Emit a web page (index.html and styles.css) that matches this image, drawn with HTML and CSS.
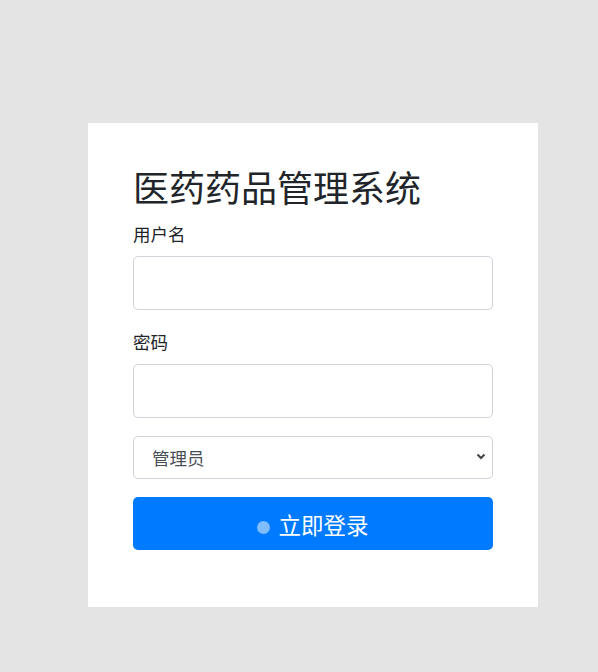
FILE: index.html
```html
<!DOCTYPE html>
<html lang="zh-CN">
<head>
<meta charset="utf-8">
<title>医药药品管理系统</title>
<link rel="stylesheet" href="styles.css">
</head>
<body>
<div class="page">
  <form class="card">
    <h1 class="title">医药药品管理系统</h1>
    <label class="label" for="u">用户名</label>
    <input class="field" id="u" type="text">
    <label class="label label-gap" for="p">密码</label>
    <input class="field" id="p" type="password">
    <div class="select-wrap">
      <select class="select">
        <option>管理员</option>
      </select>
      <svg class="chev" width="10" height="7" viewBox="0 0 10 7"><path d="M1.5 1.5 L5 5 L8.5 1.5" fill="none" stroke="#444" stroke-width="2"/></svg>
    </div>
    <button class="btn" type="button"><span class="dot"></span>立即登录</button>
  </form>
</div>
</body>
</html>
```
FILE: styles.css
```css
html, body {
  margin: 0;
  padding: 0;
  background: #e4e4e4;
  font-family: "Noto Sans CJK SC", "Noto Sans", sans-serif;
  color: #212529;
}
.page {
  padding-top: 123px;
  padding-left: 88px;
}
.card {
  width: 450px;
  box-sizing: border-box;
  background: #fff;
  padding: 42px 45px 56px;
  display: flex;
  flex-direction: column;
  height: 484px;
}
.title {
  margin: 0 0 14px;
  font-size: 36px;
  font-weight: 400;
  line-height: 43px;
  color: #212529;
}
.label {
  font-size: 17.5px;
  line-height: 24px;
  margin-bottom: 10px;
}
.label-gap {
  margin-top: 20px;
}
.field {
  height: 54px;
  box-sizing: border-box;
  border: 1px solid #ced4da;
  border-radius: 5px;
  width: 360px;
  margin: 0;
  padding: 6px 12px;
  font-size: 16px;
  background: #fff;
}
.select-wrap {
  position: relative;
  margin-top: 18px;
  width: 360px;
}
.select {
  appearance: none;
  -webkit-appearance: none;
  width: 360px;
  height: 43px;
  box-sizing: border-box;
  border: 1px solid #ced4da;
  border-radius: 5px;
  background: #fff;
  padding: 0 18px;
  font-family: "Noto Sans CJK SC", sans-serif;
  font-size: 17.5px;
  color: #495057;
  margin: 0;
}
.chev {
  position: absolute;
  right: 7px;
  top: 17px;
}
.btn {
  margin-top: 18px;
  width: 360px;
  height: 53px;
  border: none;
  border-radius: 5px;
  background: #007bff;
  color: #fff;
  font-family: "Noto Sans CJK SC", sans-serif;
  font-size: 22.5px;
  display: flex;
  align-items: center;
  justify-content: center;
  gap: 8px;
  padding: 0;
}
.dot {
  width: 13px;
  height: 13px;
  border-radius: 50%;
  background: #80bdff;
  margin-top: 8px;
}
```
